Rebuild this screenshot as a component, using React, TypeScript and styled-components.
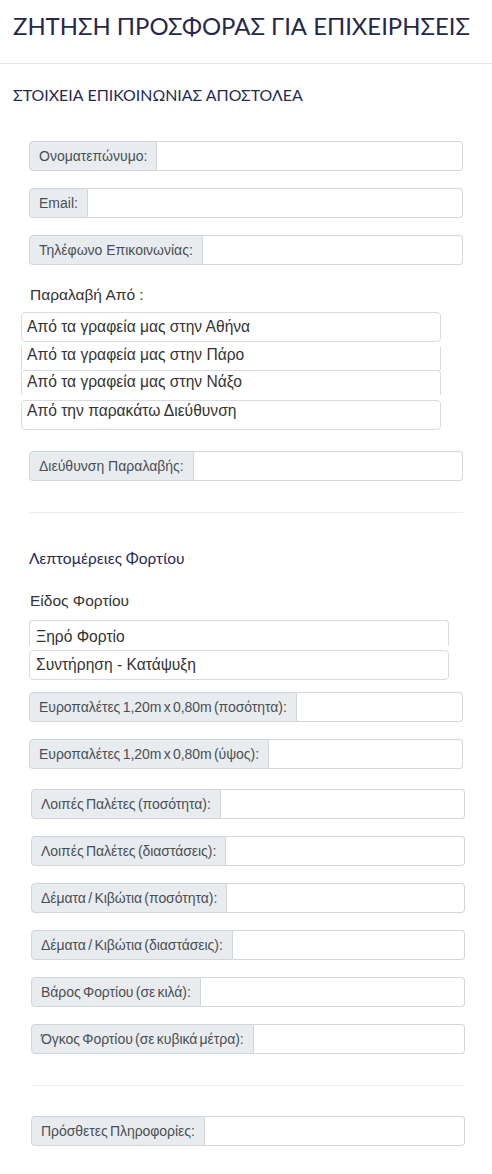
import React, { FC } from 'react';
import styled, { createGlobalStyle } from 'styled-components';

const GlobalStyle = createGlobalStyle`
  body {
    margin: 0;
    background: #ffffff;
    font-family: 'Liberation Sans', Arial, sans-serif;
  }
`;

const Page = styled.div`
  width: 492px;
  min-height: 1174px;
  background: #ffffff;
`;

const Header = styled.header`
  padding: 11px 13px 22px;
  border-bottom: 1px solid #e6e6e6;
`;

const Title = styled.h1`
  margin: 0;
  font-family: Lato, 'Liberation Sans', sans-serif;
  font-weight: 400;
  font-size: 23.9px;
  line-height: 30px;
  color: #26284a;
  white-space: nowrap;
`;

const SectionTitle = styled.h2`
  margin: 21px 13px 0;
  font-family: Lato, 'Liberation Sans', sans-serif;
  font-weight: 400;
  font-size: 15.9px;
  line-height: 20px;
  color: #1f2a57;
`;

const Form = styled.form`
  display: flex;
  flex-direction: column;
  padding: 0 29px;
`;

const SubTitle = styled.h3`
  margin: 35px 0 0;
  font-family: Lato, 'Liberation Sans', sans-serif;
  font-weight: 400;
  font-size: 15.5px;
  line-height: 20px;
  color: #1f2a57;
`;

const FieldCaption = styled.div<{ $top: number }>`
  margin-top: ${({ $top }) => $top}px;
  padding-left: 1px;
  font-size: 15.5px;
  line-height: 18px;
  color: #333333;
`;

const Group = styled.div<{ $top: number; $shift?: boolean }>`
  display: flex;
  height: 30px;
  box-sizing: border-box;
  width: 434px;
  margin-top: ${({ $top }) => $top}px;
  margin-left: ${({ $shift }) => ($shift ? 2 : 0)}px;
`;

const Addon = styled.span<{ $tight?: boolean }>`
  display: flex;
  align-items: center;
  padding: 0 9px;
  background: #e9ecef;
  border: 1px solid #d2d6db;
  border-radius: 4px 0 0 4px;
  font-size: 14px;
  color: #4a4f55;
  white-space: nowrap;
  word-spacing: ${({ $tight }) => ($tight ? '-1.5px' : '0')};
  letter-spacing: ${({ $tight }) => ($tight ? '-0.05px' : '0')};
`;

const Field = styled.input`
  flex: 1;
  min-width: 0;
  border: 1px solid #d2d6db;
  border-left: none;
  border-radius: 0 4px 4px 0;
  background: #ffffff;
  outline: none;
`;

type Edge = 'full' | 'sides' | 'open';

const OptionList = styled.div<{ $left: number; $top: number; $pad: number }>`
  display: flex;
  flex-direction: column;
  width: 420px;
  margin-left: ${({ $left }) => $left}px;
  margin-top: ${({ $top }) => $top}px;
  font-size: 15.6px;

  & > label {
    padding-left: ${({ $pad }) => $pad}px;
  }
`;

const Option = styled.label<{ $edge: Edge; $h: number; $gap?: number; $lh: number; $pt?: number }>`
  display: block;
  box-sizing: border-box;
  height: ${({ $h }) => $h}px;
  margin-top: ${({ $gap }) => $gap ?? 0}px;
  padding-top: ${({ $pt }) => $pt ?? 0}px;
  padding-right: 5px;
  border-left: 1px solid #d9dbe0;
  border-right: 1px solid #d9dbe0;
  border-top: ${({ $edge }) => ($edge === 'sides' ? 'none' : '1px solid #d9dbe0')};
  border-bottom: ${({ $edge }) => ($edge === 'full' ? '1px solid #d9dbe0' : 'none')};
  border-radius: ${({ $edge }) => ($edge === 'full' ? '4px' : $edge === 'open' ? '4px 4px 0 0' : '0')};
  line-height: ${({ $lh }) => $lh}px;
  color: #333333;
  white-space: nowrap;
`;

const Divider = styled.hr<{ $top: number; $shift?: boolean }>`
  width: 434px;
  height: 0;
  margin: ${({ $top }) => $top}px 0 0 ${({ $shift }) => ($shift ? 2 : 0)}px;
  border: none;
  border-top: 1px solid #ececec;
`;

const InputRow: FC<{ label: string; top: number; shift?: boolean; tight?: boolean }> = ({ label, top, shift, tight }) => (
  <Group $top={top} $shift={shift}>
    <Addon $tight={tight}>{label}</Addon>
    <Field type='text' />
  </Group>
);

const cargoFields = [
  'Λοιπές Παλέτες (ποσότητα):',
  'Λοιπές Παλέτες (διαστάσεις):',
  'Δέματα / Κιβώτια (ποσότητα):',
  'Δέματα / Κιβώτια (διαστάσεις):',
  'Βάρος Φορτίου (σε κιλά):',
  'Όγκος Φορτίου (σε κυβικά μέτρα):',
];

export default function App() {
  return (
    <Page>
      <GlobalStyle />
      <Header>
        <Title>ΖΗΤΗΣΗ ΠΡΟΣΦΟΡΑΣ ΓΙΑ ΕΠΙΧΕΙΡΗΣΕΙΣ</Title>
      </Header>

      <SectionTitle>ΣΤΟΙΧΕΙΑ ΕΠΙΚΟΙΝΩΝΙΑΣ ΑΠΟΣΤΟΛΕΑ</SectionTitle>

      <Form onSubmit={(e) => e.preventDefault()}>
        <InputRow label='Ονοματεπώνυμο:' top={36} />
        <InputRow label='Email:' top={17} />
        <InputRow label='Τηλέφωνο Επικοινωνίας:' top={17} />

        <FieldCaption $top={21}>Παραλαβή Από :</FieldCaption>
        <OptionList $left={-8} $top={8} $pad={5}>
          <Option $edge='full' $h={30} $lh={28}>Από τα γραφεία μας στην Αθήνα</Option>
          <Option $edge='sides' $h={23} $gap={5} $lh={15}>Από τα γραφεία μας στην Πάρο</Option>
          <Option $edge='open' $h={25} $lh={22}>Από τα γραφεία μας στην Νάξο</Option>
          <Option $edge='full' $h={30} $gap={5} $lh={18} $pt={1}>Από την παρακάτω Διεύθυνση</Option>
        </OptionList>

        <InputRow label='Διεύθυνση Παραλαβής:' top={21} />

        <Divider $top={31} />

        <SubTitle>Λεπτομέρειες Φορτίου</SubTitle>
        <FieldCaption $top={24}>Είδος Φορτίου</FieldCaption>
        <OptionList $left={0} $top={10} $pad={6}>
          <Option $edge='open' $h={26} $lh={20} $pt={6}>Ξηρό Φορτίο</Option>
          <Option $edge='full' $h={30} $gap={4} $lh={28}>Συντήρηση - Κατάψυξη</Option>
        </OptionList>

        <InputRow label='Ευροπαλέτες 1,20m x 0,80m (ποσότητα):' top={12} tight />
        <InputRow label='Ευροπαλέτες 1,20m x 0,80m (ύψος):' top={17} tight />

        {cargoFields.map((label, i) => (
          <InputRow key={label} label={label} top={i === 0 ? 20 : 17} shift tight />
        ))}

        <Divider $top={31} $shift />

        <InputRow label='Πρόσθετες Πληροφορίες:' top={30} shift tight />
      </Form>
    </Page>
  );
}
